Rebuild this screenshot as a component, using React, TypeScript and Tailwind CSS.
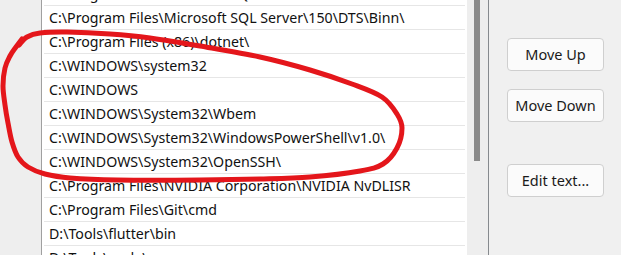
import React from "react";

const rows = [
  "C:\\Program Files\\Microsoft SQL Server\\150\\Tools\\Binn\\",
  "C:\\Program Files\\Microsoft SQL Server\\150\\DTS\\Binn\\",
  "C:\\Program Files (x86)\\dotnet\\",
  "C:\\WINDOWS\\system32",
  "C:\\WINDOWS",
  "C:\\WINDOWS\\System32\\Wbem",
  "C:\\WINDOWS\\System32\\WindowsPowerShell\\v1.0\\",
  "C:\\WINDOWS\\System32\\OpenSSH\\",
  "C:\\Program Files\\NVIDIA Corporation\\NVIDIA NvDLISR",
  "C:\\Program Files\\Git\\cmd",
  "D:\\Tools\\flutter\\bin",
  "D:\\Tools\\node\\",
];

const pts: [number, number][] = [
  [22, 39], [16, 47], [10, 56], [5, 68], [3, 86], [5, 105], [8, 123], [12, 142],
  [18, 157], [28, 167], [45, 174], [70, 178], [117, 180], [200, 180], [260, 179],
  [310, 177], [360, 171], [383, 164], [397, 148], [402, 128], [397, 114], [382, 97],
  [352, 84], [310, 70], [260, 57], [200, 46], [150, 38], [110, 34], [67, 32],
  [40, 33], [27, 37], [19, 45],
];

function smoothPath(p: [number, number][]) {
  let d = `M ${p[0][0]} ${p[0][1]}`;
  for (let i = 0; i < p.length - 1; i++) {
    const p0 = p[i - 1] || p[i];
    const p1 = p[i];
    const p2 = p[i + 1];
    const p3 = p[i + 2] || p2;
    const c1x = p1[0] + (p2[0] - p0[0]) / 6;
    const c1y = p1[1] + (p2[1] - p0[1]) / 6;
    const c2x = p2[0] - (p3[0] - p1[0]) / 6;
    const c2y = p2[1] - (p3[1] - p1[1]) / 6;
    d += ` C ${c1x.toFixed(1)} ${c1y.toFixed(1)}, ${c2x.toFixed(1)} ${c2y.toFixed(1)}, ${p2[0]} ${p2[1]}`;
  }
  return d;
}

function Btn({ children }: { children: React.ReactNode }) {
  return (
    <button className="w-[97px] h-[33px] rounded-[4px] border border-[#cfcfcf] bg-[#fbfbfb] text-[14.5px] text-[#1a1a1a] flex items-center justify-center">
      {children}
    </button>
  );
}

export default function App() {
  return (
    <div
      className="relative w-[621px] h-[255px] overflow-hidden flex bg-[#f0f0f0]"
      style={{ fontFamily: "'Noto Sans', 'Open Sans', sans-serif" }}
    >
      <div className="w-[41px] shrink-0 bg-[#eeeeee]" />
      <div className="w-[426px] shrink-0 border-l border-[#a0a0a0] bg-white overflow-hidden">
        <div className="-mt-[18px] flex flex-col">
          {rows.map((r, i) => (
            <div
              key={i}
              className="h-[24px] shrink-0 mx-[2px] pl-[5px] border-b border-[#e6e6e6] flex items-center text-[14.2px] text-[#111] whitespace-nowrap"
            >
              {r}
            </div>
          ))}
        </div>
      </div>
      <div className="w-[21px] shrink-0 bg-[#eeeeee]">
        <div className="ml-[7px] w-[6px] h-[161px] bg-[#8a8a8a]" />
      </div>
      <div className="w-px shrink-0 bg-[#868a8e]" />
      <div className="flex-1 bg-[#f0f0f0] flex flex-col pl-[18px] pt-[38px]">
        <Btn>Move Up</Btn>
        <div className="h-[18px]" />
        <Btn>Move Down</Btn>
        <div className="h-[42px]" />
        <Btn>Edit text...</Btn>
      </div>
      <svg
        className="absolute left-0 top-0 pointer-events-none"
        width="621"
        height="255"
        viewBox="0 0 621 255"
      >
        <path
          d={smoothPath(pts)}
          fill="none"
          stroke="#e4161b"
          strokeWidth="5"
          strokeLinecap="round"
          strokeLinejoin="round"
        />
      </svg>
    </div>
  );
}
